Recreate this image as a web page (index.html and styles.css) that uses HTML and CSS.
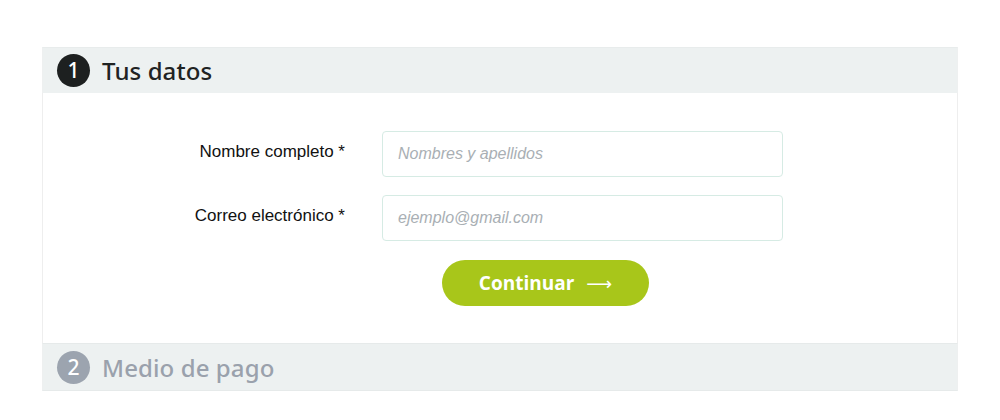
FILE: index.html
```html
<!DOCTYPE html>
<html lang="es">
<head>
<meta charset="utf-8">
<title>Checkout</title>
<link rel="stylesheet" href="styles.css">
</head>
<body>
<div class="checkout">
  <section class="step step-active">
    <header class="step-head">
      <span class="step-num">1</span>
      <h2 class="step-title">Tus datos</h2>
    </header>
    <div class="step-body">
      <form class="form">
        <label class="form-label" for="nombre">Nombre completo *</label>
        <input class="form-input" id="nombre" type="text" placeholder="Nombres y apellidos">
        <label class="form-label" for="correo">Correo electrónico *</label>
        <input class="form-input" id="correo" type="email" placeholder="ejemplo@gmail.com">
        <div class="form-actions">
          <button class="btn" type="button">Continuar <span class="btn-arrow">⟶</span></button>
        </div>
      </form>
    </div>
  </section>
  <section class="step step-inactive">
    <header class="step-head">
      <span class="step-num">2</span>
      <h2 class="step-title">Medio de pago</h2>
    </header>
  </section>
</div>
</body>
</html>
```
FILE: styles.css
```css
html, body {
  margin: 0;
  padding: 0;
  background: #ffffff;
}
body {
  padding: 47px 42px 0 42px;
  font-family: "Liberation Sans", Arial, sans-serif;
}
.checkout {
  width: 916px;
}
.step-head {
  display: flex;
  align-items: center;
  height: 46px;
  box-sizing: border-box;
  padding-left: 14px;
  background: #edf1f1;
  border-top: 1px solid #e8ecec;
  border-left: 1px solid #eef0f0;
  border-right: 1px solid #eef0f0;
}
.step-num {
  width: 33px;
  height: 33px;
  border-radius: 50%;
  background: #1d2020;
  color: #fff;
  display: flex;
  align-items: center;
  justify-content: center;
  font-family: "Noto Sans", sans-serif;
  font-size: 21px;
  font-weight: 500;
  line-height: 1;
}
.step-title {
  margin: 0 0 0 12px;
  font-family: "Noto Sans", sans-serif;
  font-weight: 500;
  font-size: 24px;
  color: #1f2323;
  letter-spacing: 0.1px;
}
.step-inactive .step-head {
  border-top: 1px solid #e6eaea;
  border-bottom: 1px solid #e6eaea;
  height: 48px;
}
.step-inactive .step-num {
  background: #9ca4af;
}
.step-inactive .step-title {
  color: #9aa1ac;
}
.step-body {
  background: #fff;
  border-left: 1px solid #eeeeee;
  border-right: 1px solid #eeeeee;
  padding: 38px 0 37px 0;
}
.form {
  display: grid;
  grid-template-columns: 302px 401px;
  column-gap: 37px;
  row-gap: 18px;
  align-items: center;
}
.form-label {
  text-align: right;
  font-size: 17px;
  color: #111;
  padding-bottom: 4px;
}
.form-input {
  box-sizing: border-box;
  height: 46px;
  width: 401px;
  border: 1px solid #d6ebe4;
  border-radius: 4px;
  padding: 0 15px;
  font-family: "Liberation Sans", Arial, sans-serif;
  font-size: 16px;
  color: #333;
  outline: none;
}
.form-input::placeholder {
  color: #a9afb4;
  font-style: italic;
}
.form-actions {
  grid-column: 2;
  padding-left: 60px;
  padding-top: 1px;
}
.btn {
  width: 207px;
  height: 46px;
  border: none;
  border-radius: 23px;
  background: #a8c61a;
  color: #fff;
  font-family: "Open Sans", sans-serif;
  font-weight: 700;
  font-size: 19px;
  display: flex;
  align-items: center;
  justify-content: center;
  gap: 12px;
  cursor: pointer;
  padding: 0;
}
.btn-arrow {
  font-family: "DejaVu Sans", sans-serif;
  font-weight: 400;
  font-size: 18px;
}
```
